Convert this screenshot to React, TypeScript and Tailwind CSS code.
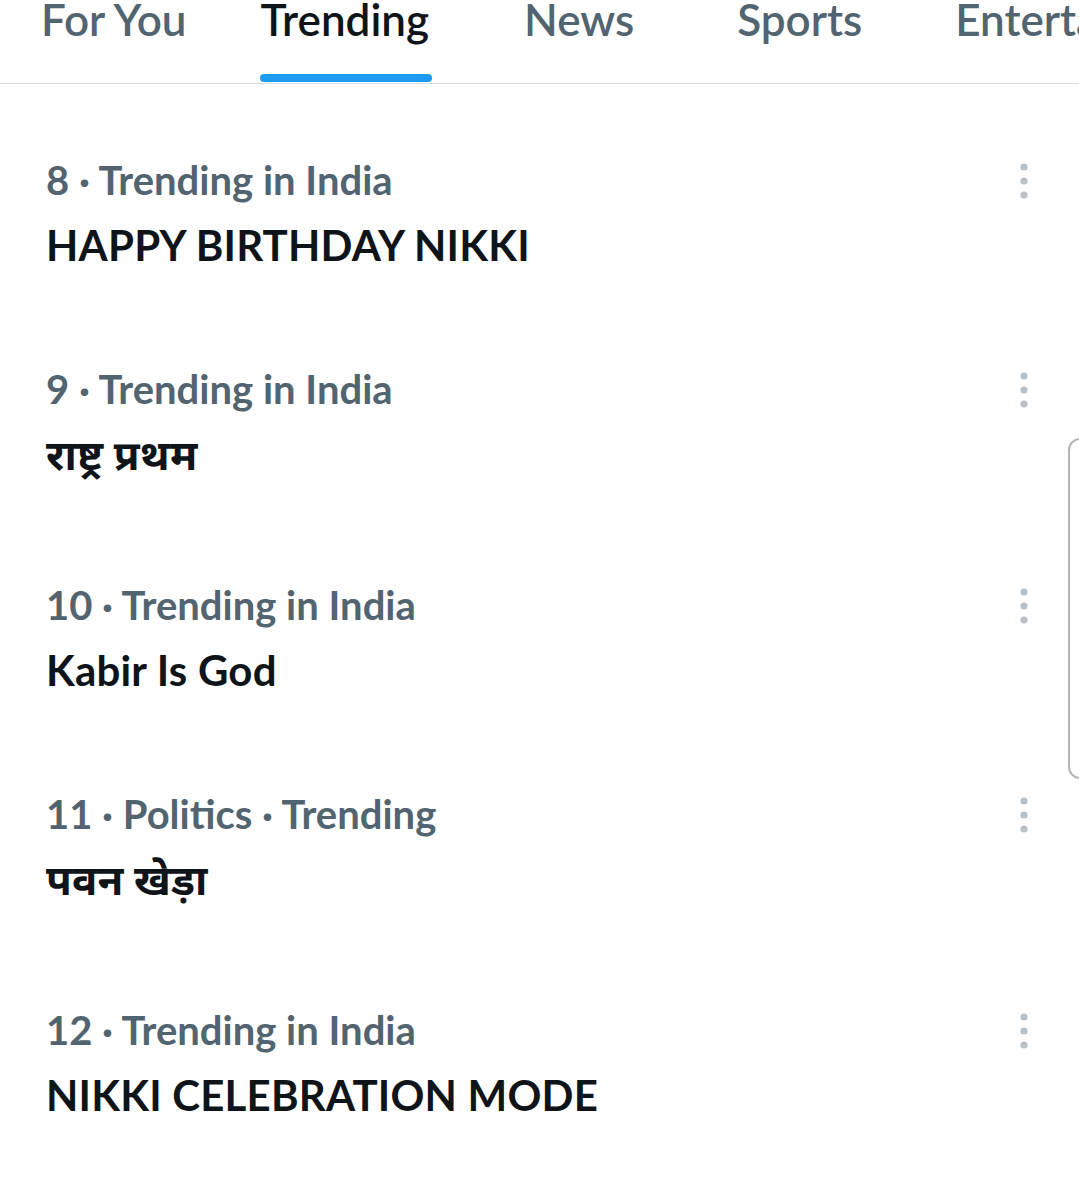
import React from "react";

const tabs = [
  { label: "For You", ml: "ml-[41px]", active: false },
  { label: "Trending", ml: "ml-[74px]", active: true },
  { label: "News", ml: "ml-[95px]", active: false },
  { label: "Sports", ml: "ml-[103px]", active: false },
  { label: "Entertainment", ml: "ml-[93px]", active: false },
];

const items = [
  { meta: "8 · Trending in India", title: "HAPPY BIRTHDAY NIKKI", dev: false },
  { meta: "9 · Trending in India", title: "राष्ट्र प्रथम", dev: true },
  { meta: "10 · Trending in India", title: "Kabir Is God", dev: false },
  { meta: "11 · Politics · Trending", title: "पवन खेड़ा", dev: true },
  { meta: "12 · Trending in India", title: "NIKKI CELEBRATION MODE", dev: false },
];

function Dots() {
  return (
    <svg width="14" height="40" viewBox="0 0 14 40" className="block">
      <circle cx="7" cy="6" r="3.6" fill="#b6c0c8" />
      <circle cx="7" cy="20" r="3.6" fill="#b6c0c8" />
      <circle cx="7" cy="34" r="3.6" fill="#b6c0c8" />
    </svg>
  );
}

export default function App() {
  return (
    <div
      className="relative w-[1079px] h-[1193px] overflow-hidden bg-white"
      style={{ fontFamily: "Lato, 'Noto Sans', 'Noto Sans Devanagari', sans-serif" }}
    >
      <div className="flex h-[84px] border-b border-[#d6dde1] whitespace-nowrap">
        {tabs.map((t) => (
          <div key={t.label} className={`relative ${t.ml} shrink-0`}>
            <div
              className={`text-[44px] leading-[44px] -mt-[3px] font-semibold ${
                t.active ? "text-[#0f1419]" : "text-[#536471]"
              }`}
            >
              {t.label}
            </div>
            {t.active && (
              <div className="absolute left-[-1px] w-[172px] top-[74px] h-[8px] rounded-full bg-[#1d9bf0]" />
            )}
          </div>
        ))}
      </div>

      <div className="pt-[24px]">
        {items.map((it) => (
          <div
            key={it.meta}
            className={`flex pl-[46px] pr-[48px] pt-[47px] ${it.dev ? "pb-[54px]" : "pb-[47px]"}`}
          >
            <div className="flex-1 flex flex-col">
              <div className="text-[40px] leading-[50px] font-bold text-[#536471]">{it.meta}</div>
              <div className="mt-[15px] text-[42px] leading-[50px] font-bold text-[#0f1419] tracking-[0.2px]">
                {it.title}
              </div>
            </div>
            <div className="pt-[6px]">
              <Dots />
            </div>
          </div>
        ))}
      </div>

      <div className="absolute left-[1068px] top-[438px] w-[20px] h-[341px] rounded-l-[12px] border-2 border-[#b4b4b4] bg-white" />
    </div>
  );
}
